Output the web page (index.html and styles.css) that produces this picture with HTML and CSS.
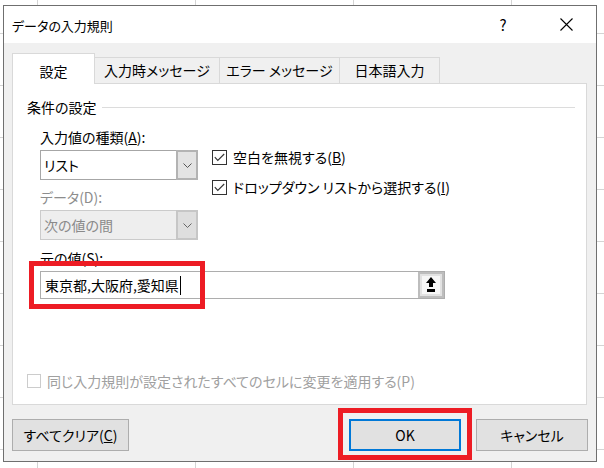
FILE: index.html
```html
<!doctype html>
<html lang="ja">
<head>
	<meta charset="UTF-8">
	<title>データの入力規則</title>
	<link rel="stylesheet" href="styles.css">
</head>
<body>
	<div class="dialog">
		<div class="titlebar">
			<span class="title">データの入力規則</span>
			<span class="help">?</span>
			<span class="close">
				<svg width="13" height="13" viewBox="0 0 13 13"><path d="M0.5 0.5L12.5 12.5M12.5 0.5L0.5 12.5" stroke="#000" stroke-width="1.1" fill="none"/></svg>
			</span>
		</div>
		<div class="content">
			<div class="tabs">
				<div class="tab active">設定</div>
				<div class="tab t2">入力時メッセージ</div>
				<div class="tab t3">エラー メッセージ</div>
				<div class="tab t4">日本語入力</div>
			</div>
			<div class="panel">
				<div class="legend"><span>条件の設定</span><span class="rule"></span></div>
				<div class="criteria">
					<div class="col-left">
						<div class="label">入力値の種類(<u>A</u>):</div>
						<div class="select">
							<span class="value">リスト</span>
							<span class="arrow"><svg width="9" height="5" viewBox="0 0 9 5"><path d="M0.5 0.5L4.5 4.5L8.5 0.5" stroke="#555" fill="none"/></svg></span>
						</div>
						<div class="label off">データ(D):</div>
						<div class="select off">
							<span class="value">次の値の間</span>
							<span class="arrow"><svg width="9" height="5" viewBox="0 0 9 5"><path d="M0.5 0.5L4.5 4.5L8.5 0.5" stroke="#666" fill="none"/></svg></span>
						</div>
					</div>
					<div class="col-right">
						<div class="check">
							<span class="box"><svg width="11" height="9" viewBox="0 0 11 9"><path d="M0.8 4.2L3.8 7.4L10.2 1" stroke="#333" stroke-width="1.1" fill="none"/></svg></span>
							<span>空白を無視する(<u>B</u>)</span>
						</div>
						<div class="check">
							<span class="box"><svg width="11" height="9" viewBox="0 0 11 9"><path d="M0.8 4.2L3.8 7.4L10.2 1" stroke="#333" stroke-width="1.1" fill="none"/></svg></span>
							<span>ドロップダウン リストから選択する(<u>I</u>)</span>
						</div>
					</div>
				</div>
				<div class="label source">元の値(<u>S</u>):</div>
				<div class="field">
					<span class="text">東京都,大阪府,愛知県</span><span class="caret"></span>
					<span class="pick"><svg width="10" height="16" viewBox="0 0 10 16"><path d="M5 0L10 6H7V10H3V6H0Z" fill="#000"/><rect x="1" y="12" width="8" height="3" fill="#000"/></svg></span>
				</div>
				<div class="check apply">
					<span class="box"></span>
					<span>同じ入力規則が設定されたすべてのセルに変更を適用する(P)</span>
				</div>
			</div>
			<div class="buttons">
				<div class="btn clear">すべてクリア(<u>C</u>)</div>
				<div class="btn ok">OK</div>
				<div class="btn cancel">キャンセル</div>
			</div>
		</div>
		<!-- 赤枠の注釈 -->
		<div class="mark mark-source"></div>
		<div class="mark mark-ok"></div>
	</div>
</body>
</html>
```

FILE: styles.css
```css
body{
	margin: 0;
	width: 604px;
	height: 468px;
	overflow: hidden;
	background-color: #fff;
	background-image: linear-gradient(to right, #d4d4d4 1px, transparent 1px), linear-gradient(to bottom, #d4d4d4 1px, transparent 1px);
	background-size: 158px 100%, 100% 52px;
	background-position: 37px 0, 0 33px;
	font-family: "Noto Sans CJK JP", "Noto Sans", sans-serif;
	font-feature-settings: "palt";
	font-size: 14px;
	color: #000;
}
.dialog{
	position: relative;
	margin: 5px 0 0 3px;
	width: 594px;
	height: 457px;
	box-sizing: border-box;
	border: 1px solid #6f6f6f;
	background: #f0f0f0;
	display: flex;
	flex-direction: column;
}
.titlebar{
	height: 37px;
	background: #fff;
	display: flex;
	align-items: center;
	padding-left: 8px;
}
.title{
	font-size: 13px;
	flex: 1;
	padding-top: 1px;
}
.help{
	width: 14px;
	text-align: center;
	font-size: 15px;
	margin-right: 50px;
}
.close{
	width: 13px;
	height: 13px;
	margin-right: 23px;
	display: flex;
}
.content{
	padding: 10px 8px 0 8px;
	display: flex;
	flex-direction: column;
}
.tabs{
	display: flex;
	align-items: flex-end;
	height: 30px;
}
.tab{
	box-sizing: border-box;
	height: 26px;
	border: 1px solid #d9d9d9;
	border-bottom: none;
	background: #f0f0f0;
	text-align: center;
	line-height: 25px;
	margin-left: -1px;
}
.tab.active{
	position: relative;
	z-index: 1;
	height: 31px;
	margin-bottom: -1px;
	margin-left: 0;
	width: 83px;
	background: #fff;
	line-height: 34px;
}
.t2{ width: 126px; }
.t3{ width: 121px; }
.t4{ width: 101px; }
.panel{
	box-sizing: border-box;
	width: 575px;
	height: 322px;
	border: 1px solid #d9d9d9;
	background: #fff;
	padding: 13px 11px 13px 14px;
	display: flex;
	flex-direction: column;
}
.legend{
	display: flex;
	align-items: center;
	height: 20px;
}
.rule{
	flex: 1;
	height: 1px;
	background: #dcdcdc;
	margin-left: 5px;
}
.criteria{
	display: flex;
	margin-left: 13px;
	margin-top: 10px;
}
.col-left{
	width: 158px;
	margin-right: 14px;
}
.label{
	height: 20px;
	line-height: 20px;
}
.label.off{
	color: #8d8d8d;
	margin-top: 7px;
}
.label.source{
	margin-left: 13px;
	margin-top: 8px;
}
.select{
	box-sizing: border-box;
	height: 30px;
	margin-top: 3px;
	border: 1px solid #a6a6a6;
	display: flex;
	align-items: center;
}
.select .value{
	flex: 1;
	padding-left: 3px;
}
.select .arrow{
	box-sizing: border-box;
	width: 22px;
	height: 30px;
	margin: -1px -1px -1px 0;
	border: 2px solid #b3b3b3;
	background: #e3e3e3;
	display: flex;
	align-items: center;
	justify-content: center;
}
.select.off{
	background: #eeeeee;
	border-color: #cbcbcb;
	color: #8a8a8a;
}
.select.off .arrow{
	border-color: #c6c6c6;
	background: #dedede;
}
.col-right{
	padding-top: 15px;
}
.check{
	display: flex;
	align-items: center;
	height: 30px;
}
.box{
	box-sizing: border-box;
	width: 15px;
	height: 15px;
	border: 1px solid #333;
	background: #fff;
	margin-right: 6px;
	display: flex;
	align-items: center;
	justify-content: center;
}
.field{
	box-sizing: border-box;
	width: 405px;
	height: 28px;
	margin: 3px 0 0 13px;
	border: 1px solid #adadad;
	display: flex;
	align-items: center;
	padding-left: 4px;
}
.caret{
	width: 1px;
	height: 19px;
	background: #000;
	margin-left: 1px;
}
.pick{
	box-sizing: border-box;
	margin-left: auto;
	width: 26px;
	height: 26px;
	border: 2px solid #bdbdbd;
	background: #f7f7f7;
	box-shadow: inset 0 0 0 2px #e2e2e2;
	display: flex;
	align-items: center;
	justify-content: center;
}
.apply{
	margin-top: auto;
	height: 20px;
	color: #a0a0a0;
}
.apply .box{
	width: 14px;
	height: 14px;
	border-color: #cccccc;
	margin-right: 6px;
}
.buttons{
	display: flex;
	margin-top: 14px;
}
.btn{
	box-sizing: border-box;
	height: 32px;
	border: 1px solid #adadad;
	background: #e1e1e1;
	text-align: center;
	line-height: 30px;
}
.clear{
	width: 117px;
	margin-right: auto;
}
.ok{
	width: 112px;
	border: 2px solid #0078d7;
	line-height: 28px;
	margin-right: 15px;
}
.cancel{
	width: 112px;
}
.mark{
	position: absolute;
	box-sizing: border-box;
	border: 5px solid #ed1c24;
}
.mark-source{
	left: 25px;
	top: 255px;
	width: 176px;
	height: 48px;
}
.mark-ok{
	left: 334px;
	top: 402px;
	width: 134px;
	height: 52px;
}
```
